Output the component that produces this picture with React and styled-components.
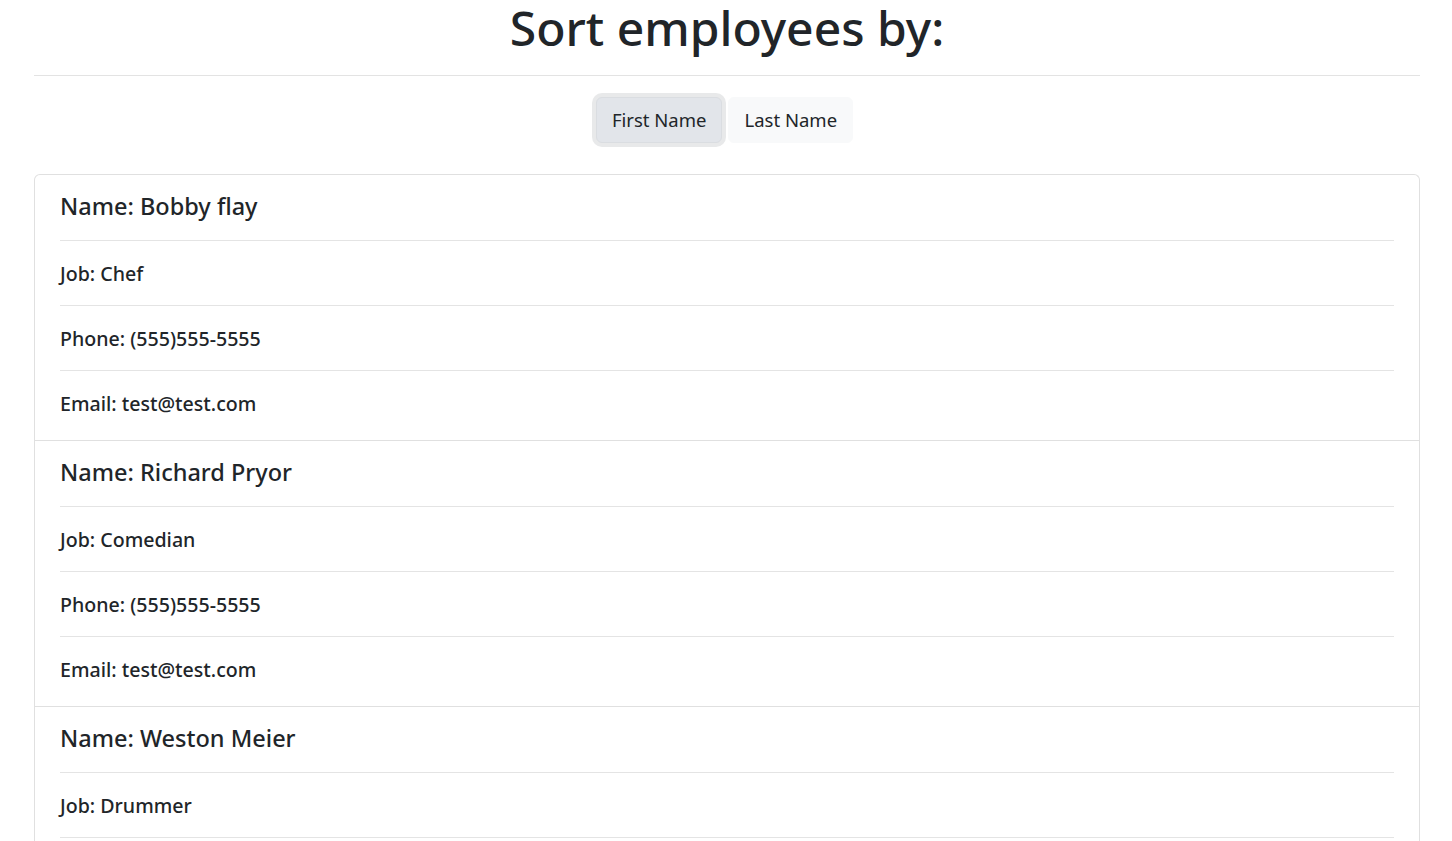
import React, { useState } from "react";
import styled, { createGlobalStyle } from "styled-components";

const Global = createGlobalStyle`
  html, body { margin: 0; padding: 0; background: #fff; }
  body {
    font-family: "Noto Sans", "Open Sans", "Liberation Sans", sans-serif;
    color: #212529;
  }
  * { box-sizing: border-box; }
`;

const Page = styled.div`
  padding: 0 32px 0 34px;
`;

const Title = styled.h1`
  margin: 0;
  font-size: 48px;
  font-weight: 500;
  line-height: 56px;
  text-align: center;
  padding-bottom: 19px;
  border-bottom: 1px solid #e3e3e3;
`;

const SortBar = styled.div`
  display: flex;
  justify-content: center;
  gap: 6px;
  padding: 21px 5px 31px 0;
`;

const SortButton = styled.button`
  font-family: inherit;
  font-size: 18.5px;
  line-height: 28px;
  color: #212529;
  padding: 8px 15px;
  border-radius: 6px;
  cursor: pointer;
  border: 1px solid ${(p) => (p.$active ? "#dadde1" : "#f8f9fa")};
  background: ${(p) => (p.$active ? "#e2e5ea" : "#f8f9fa")};
  box-shadow: ${(p) => (p.$active ? "0 0 0 4px #e8e9ea" : "none")};
  outline: none;
`;

const Card = styled.div`
  border: 1px solid #e0e0e0;
  border-radius: 6px;
  border-bottom: none;
`;

const Employee = styled.div`
  padding: 0 25px 5px;
  & + & {
    border-top: 1px solid #e0e0e0;
  }
`;

const Row = styled.div`
  display: flex;
  align-items: center;
  height: 65px;
  padding-bottom: ${(p) => (p.$head ? "4px" : "0")};
  font-size: ${(p) => (p.$head ? "23.5px" : "19.6px")};
  font-weight: 500;
  & + & {
    border-top: 1px solid #e4e4e4;
  }
`;

const employees = [
  { first: "Bobby", last: "flay", job: "Chef" },
  { first: "Richard", last: "Pryor", job: "Comedian" },
  { first: "Weston", last: "Meier", job: "Drummer" },
];

export default function App() {
  const [sort, setSort] = useState("first");
  return (
    <Page>
      <Global />
      <Title>Sort employees by:</Title>
      <SortBar>
        <SortButton $active={sort === "first"} onClick={() => setSort("first")}>
          First Name
        </SortButton>
        <SortButton $active={sort === "last"} onClick={() => setSort("last")}>
          Last Name
        </SortButton>
      </SortBar>
      <Card>
        {employees.map((e) => (
          <Employee key={e.first}>
            <Row $head>Name: {e.first} {e.last}</Row>
            <Row>Job: {e.job}</Row>
            <Row>Phone: (555)555-5555</Row>
            <Row>Email: test@test.com</Row>
          </Employee>
        ))}
      </Card>
    </Page>
  );
}
